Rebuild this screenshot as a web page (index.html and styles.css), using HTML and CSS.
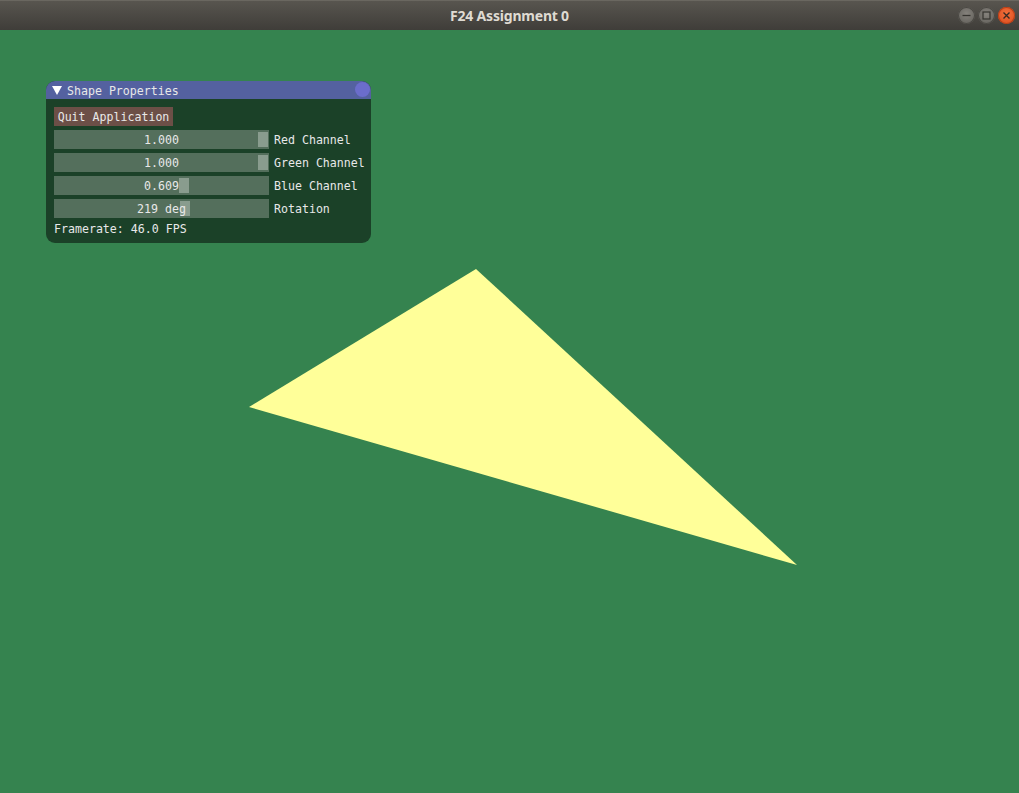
FILE: index.html
```html
<!DOCTYPE html>
<html>
<head>
<meta charset="utf-8">
<link rel="stylesheet" href="styles.css">
</head>
<body>
<div class="app">
  <header class="titlebar">
    <div class="title">F24 Assignment 0</div>
    <div class="wbtns">
      <span class="wbtn">
        <svg width="17" height="17" viewBox="0 0 17 17"><line x1="4.5" y1="8.5" x2="12.5" y2="8.5" stroke="#35342f" stroke-width="1.3"/></svg>
      </span>
      <span class="wbtn">
        <svg width="17" height="17" viewBox="0 0 17 17"><rect x="5" y="5" width="7" height="7" fill="none" stroke="#35342f" stroke-width="1.2"/></svg>
      </span>
      <span class="wbtn close">
        <svg width="17" height="17" viewBox="0 0 17 17"><path d="M5.5 5.5 L11.5 11.5 M11.5 5.5 L5.5 11.5" stroke="#3a2a22" stroke-width="1.4"/></svg>
      </span>
    </div>
  </header>
  <main class="canvas">
    <svg class="scene" width="1019" height="763" viewBox="0 0 1019 763">
      <polygon points="476,239 249,377 797,535" fill="#ffff99"/>
    </svg>
    <section class="panel">
      <div class="ptitle">
        <svg class="arrow" width="10" height="9" viewBox="0 0 10 9"><polygon points="0,0 10,0 5,9" fill="#ffffff"/></svg>
        <span class="ptext">Shape Properties</span>
        <span class="pclose"></span>
      </div>
      <div class="pbody">
        <div class="row"><button class="quit">Quit Application</button></div>
        <div class="row">
          <div class="slider"><span class="grab" style="left:204px"></span><span class="val">1.000</span></div>
          <span class="label">Red Channel</span>
        </div>
        <div class="row">
          <div class="slider"><span class="grab" style="left:204px"></span><span class="val">1.000</span></div>
          <span class="label">Green Channel</span>
        </div>
        <div class="row">
          <div class="slider"><span class="grab" style="left:125px"></span><span class="val">0.609</span></div>
          <span class="label">Blue Channel</span>
        </div>
        <div class="row">
          <div class="slider"><span class="grab" style="left:126px"></span><span class="val">219 deg</span></div>
          <span class="label">Rotation</span>
        </div>
        <div class="text">Framerate: 46.0 FPS</div>
      </div>
    </section>
  </main>
</div>
</body>
</html>
```
FILE: styles.css
```css
html, body {
  margin: 0;
  padding: 0;
  width: 1019px;
  height: 793px;
  overflow: hidden;
  background: #35834f;
}
.app {
  display: flex;
  flex-direction: column;
  width: 1019px;
  height: 793px;
}
.titlebar {
  height: 30px;
  flex: 0 0 30px;
  background: linear-gradient(#58554f, #3f3d39);
  border-top: 1px solid #6a6760;
  box-sizing: border-box;
  display: flex;
  align-items: center;
  justify-content: center;
  position: relative;
}
.title {
  font-family: "Noto Sans", "DejaVu Sans", sans-serif;
  font-weight: 700;
  font-size: 14px;
  color: #dfdbd2;
  letter-spacing: -0.2px;
  margin-top: -1px;
}
.wbtns {
  position: absolute;
  right: 4px;
  top: 6px;
  display: flex;
  gap: 3px;
}
.wbtn {
  width: 17px;
  height: 17px;
  border-radius: 50%;
  background: radial-gradient(circle at 50% 40%, #85827c, #5d5b56);
  box-shadow: inset 0 0 0 1px #4a4843;
  display: block;
}
.wbtn svg { display: block; }
.wbtn.close {
  background: radial-gradient(circle at 50% 40%, #f2703c, #d9481a);
  box-shadow: inset 0 0 0 1px #b83f17;
}
.canvas {
  flex: 1;
  position: relative;
  background: #35834f;
}
.scene {
  position: absolute;
  left: 0;
  top: 0;
}
.panel {
  position: absolute;
  left: 46px;
  top: 51px;
  width: 325px;
  background: #1b4128;
  border-radius: 9px;
  overflow: hidden;
  font-family: "DejaVu Sans Mono", "Liberation Mono", monospace;
  font-size: 11.6px;
  color: #e8e8e8;
  white-space: nowrap;
}
.ptitle {
  height: 18px;
  background: #5461a0;
  display: flex;
  align-items: center;
  padding-left: 6px;
  position: relative;
}
.arrow {
  display: block;
  margin-right: 5px;
}
.ptext {
  line-height: 18px;
  padding-top: 1px;
}
.pclose {
  position: absolute;
  right: 1px;
  top: 1px;
  width: 15px;
  height: 15px;
  border-radius: 50%;
  background: #6b6dcb;
}
.pbody {
  padding: 8px;
  display: flex;
  flex-direction: column;
  gap: 4px;
}
.row {
  display: flex;
  align-items: center;
  gap: 5px;
  height: 19px;
  line-height: 20px;
}
.quit {
  flex: 0 0 auto;
  height: 19px;
  width: 119px;
  padding: 1px 0 0;
  border: 0;
  background: #6c4f47;
  color: #e8e8e8;
  font: inherit;
  line-height: 19px;
  text-align: center;
}
.slider {
  flex: 0 0 215px;
  position: relative;
  width: 215px;
  height: 19px;
  background: #546f5c;
  text-align: center;
  line-height: 20px;
}
.grab {
  position: absolute;
  top: 2px;
  width: 10px;
  height: 15px;
  background: #899c8e;
}
.val {
  position: relative;
}
.label {
  flex: 0 0 auto;
  line-height: 20px;
}
.text {
  height: 13px;
  line-height: 15px;
}
```
